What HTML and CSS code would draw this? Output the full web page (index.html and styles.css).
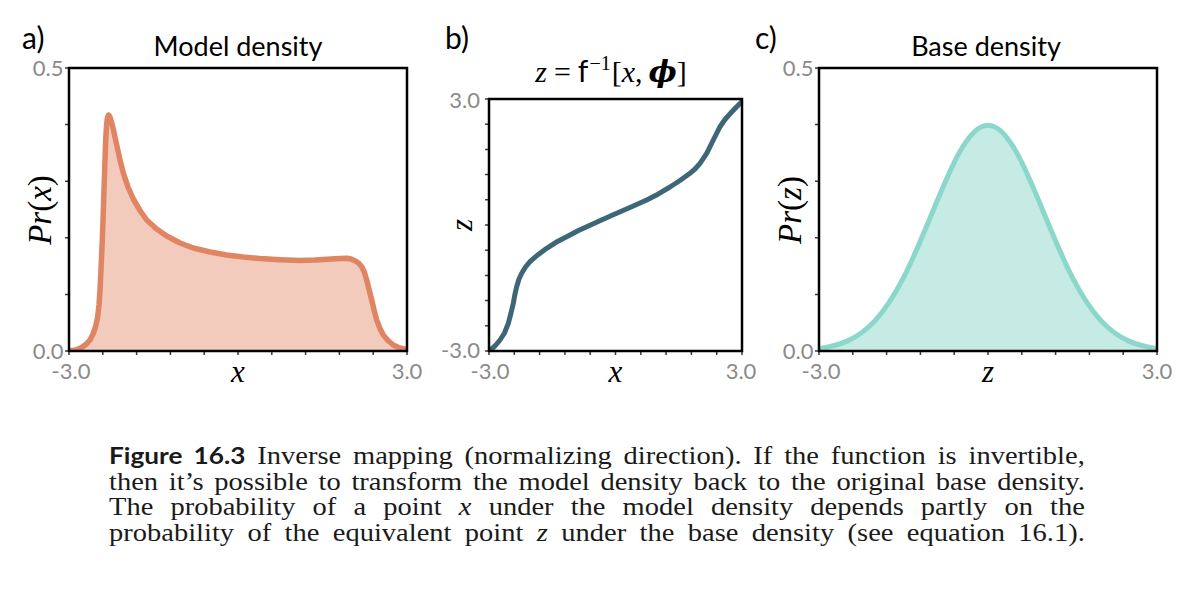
FILE: index.html
```html
<!DOCTYPE html>
<html lang="en">
<head>
<meta charset="utf-8">
<title>Figure 16.3</title>
<link rel="stylesheet" href="styles.css">
</head>
<body>
<figure class="figure">
  <div class="panels">
    <svg class="panel panel-a" width="430" height="400" viewBox="0 0 430 400">
      <defs><clipPath id="clipA"><rect x="69" y="68" width="338" height="283"/></clipPath></defs>
      <text class="plabel" x="22" y="49">a)</text>
      <text class="ptitle" x="238" y="56">Model density</text>
      <g clip-path="url(#clipA)">
        <path class="fill-a" d="M69,350.8 L74,350.3 78,349.2 82,347.3 86,344.3 90,340 93,334 95.5,327 97.5,318 99,305 100,290 101.2,265 102.3,240 103.2,215 104,190 104.9,163 105.7,140 106.5,126 107.4,118 108.5,115 109.8,116.5 111.2,121 113,128 116.7,145 120,160 123.3,173 128,187 133.3,199 140,210.5 146.7,220 156,228.5 166.7,236 180,243 193.3,248 210,252 226.7,255 243,257 260,258.5 280,259.7 300,260.5 315,260 327,259.3 340,258.4 347,258.3 351,259 355,260.7 358.5,263 361.7,266.7 364.3,272 366.7,280 369.2,290 371.7,300 374.2,310.5 376.7,320 380,328.5 383.3,335 388,340.5 393.3,345 399,347.8 407,349.5 L407,351 L69,351 Z"/>
        <path class="line-a" d="M69,350.8 L74,350.3 78,349.2 82,347.3 86,344.3 90,340 93,334 95.5,327 97.5,318 99,305 100,290 101.2,265 102.3,240 103.2,215 104,190 104.9,163 105.7,140 106.5,126 107.4,118 108.5,115 109.8,116.5 111.2,121 113,128 116.7,145 120,160 123.3,173 128,187 133.3,199 140,210.5 146.7,220 156,228.5 166.7,236 180,243 193.3,248 210,252 226.7,255 243,257 260,258.5 280,259.7 300,260.5 315,260 327,259.3 340,258.4 347,258.3 351,259 355,260.7 358.5,263 361.7,266.7 364.3,272 366.7,280 369.2,290 371.7,300 374.2,310.5 376.7,320 380,328.5 383.3,335 388,340.5 393.3,345 399,347.8 407,349.5"/>
      </g>
      <path class="ticks" d="M65,68h4M65,124.6h4M65,181.2h4M65,237.8h4M65,294.4h4M65,351h4M69,351v4M102.8,351v4M136.6,351v4M170.4,351v4M204.2,351v4M238,351v4M271.8,351v4M305.6,351v4M339.4,351v4M373.2,351v4M407,351v4"/>
      <rect class="frame" x="69" y="68" width="338" height="283"/>
      <text class="tick end" x="63.5" y="76">0.5</text>
      <text class="tick end" x="63.5" y="358.5">0.0</text>
      <text class="tick mid" x="71" y="379">-3.0</text>
      <text class="tick mid" x="407" y="379">3.0</text>
      <text class="math axl mid" x="238" y="382">x</text>
      <text class="math yl mid" transform="translate(51,210) rotate(-90)">Pr<tspan class="up">(</tspan>x<tspan class="up">)</tspan></text>
    </svg>

    <svg class="panel panel-b" width="320" height="400" viewBox="0 0 320 400">
      <defs><clipPath id="clipB"><rect x="59" y="99" width="253" height="252"/></clipPath></defs>
      <text class="plabel" x="15" y="49">b)</text>
      <text class="math mid title-b" x="181" y="82">z<tspan class="up" dx="7">=</tspan><tspan class="sans-f" dx="7">f</tspan><tspan class="sup" dx="1" dy="-12">−1</tspan><tspan class="up" dx="1" dy="12">[</tspan>x<tspan class="up">,</tspan><tspan class="phi" dx="6">ϕ</tspan><tspan class="up">]</tspan></text>
      <g clip-path="url(#clipB)">
        <path class="line-b" d="M59.5,350.5 L65,346 70,340 74.5,333 78.3,323.3 81,313 83.3,303.3 85,294 86.7,286.7 89,279 91.7,273.3 95.5,267 100,261.7 107,255.5 116.7,248.3 126,242.3 136.7,236.7 148,230.8 160,225.2 171,220.2 183.3,214.8 200,207.5 216.7,200 228,194.2 240,187 250,180.5 260,173.3 265,169 270,163.3 276.7,153.3 283.3,140 290,126.7 295,119.5 300,113.8 306,107.5 312,101.5"/>
      </g>
      <path class="ticks" d="M55,99h4M55,124.2h4M55,149.4h4M55,174.6h4M55,199.8h4M55,225h4M55,250.2h4M55,275.4h4M55,300.6h4M55,325.8h4M55,351h4M59,351v4M84.3,351v4M109.6,351v4M134.9,351v4M160.2,351v4M185.5,351v4M210.8,351v4M236.1,351v4M261.4,351v4M286.7,351v4M312,351v4"/>
      <rect class="frame" x="59" y="99" width="253" height="252"/>
      <text class="tick end" x="50" y="107.5">3.0</text>
      <text class="tick end" x="50" y="357.5">-3.0</text>
      <text class="tick mid" x="60" y="378.5">-3.0</text>
      <text class="tick mid" x="311" y="378.5">3.0</text>
      <text class="math axl mid" x="185.5" y="382">x</text>
      <text class="math axl mid" transform="translate(42,225) rotate(-90)">z</text>
    </svg>

    <svg class="panel panel-c" width="442" height="400" viewBox="0 0 442 400">
      <defs><clipPath id="clipC"><rect x="69" y="68" width="338" height="283"/></clipPath></defs>
      <text class="plabel" x="5" y="49">c)</text>
      <text class="ptitle" x="236" y="56">Base density</text>
      <g clip-path="url(#clipC)">
        <path class="fill-c" d="M69,348.5 C78.4,347.25 87.8,345.24 97.2,341.1 C106.6,336.96 115.9,330.59 125.3,320.4 C134.7,310.21 144.1,296.03 153.5,277.7 C162.9,259.37 172.3,236.83 181.7,214 C191.1,191.17 200.4,168.31 209.8,151.7 C219.2,135.09 228.6,125.2 238,125.2 C247.4,125.2 256.8,135.09 266.2,151.7 C275.6,168.31 284.9,191.17 294.3,214 C303.7,236.83 313.1,259.37 322.5,277.7 C331.9,296.03 341.3,310.21 350.7,320.4 C360.1,330.59 369.4,336.96 378.8,341.1 C388.2,345.24 397.6,347.25 407,348.5 L407,351 L69,351 Z"/>
        <path class="line-c" d="M69,348.5 C78.4,347.25 87.8,345.24 97.2,341.1 C106.6,336.96 115.9,330.59 125.3,320.4 C134.7,310.21 144.1,296.03 153.5,277.7 C162.9,259.37 172.3,236.83 181.7,214 C191.1,191.17 200.4,168.31 209.8,151.7 C219.2,135.09 228.6,125.2 238,125.2 C247.4,125.2 256.8,135.09 266.2,151.7 C275.6,168.31 284.9,191.17 294.3,214 C303.7,236.83 313.1,259.37 322.5,277.7 C331.9,296.03 341.3,310.21 350.7,320.4 C360.1,330.59 369.4,336.96 378.8,341.1 C388.2,345.24 397.6,347.25 407,348.5"/>
      </g>
      <path class="ticks" d="M65,68h4M65,124.6h4M65,181.2h4M65,237.8h4M65,294.4h4M65,351h4M69,351v4M102.8,351v4M136.6,351v4M170.4,351v4M204.2,351v4M238,351v4M271.8,351v4M305.6,351v4M339.4,351v4M373.2,351v4M407,351v4"/>
      <rect class="frame" x="69" y="68" width="338" height="283"/>
      <text class="tick end" x="63.5" y="76">0.5</text>
      <text class="tick end" x="63.5" y="358.5">0.0</text>
      <text class="tick mid" x="71" y="379">-3.0</text>
      <text class="tick mid" x="407" y="379">3.0</text>
      <text class="math axl mid" x="238" y="382">z</text>
      <text class="math yl mid" transform="translate(51,210) rotate(-90)">Pr<tspan class="up">(</tspan>z<tspan class="up">)</tspan></text>
    </svg>
  </div>

  <figcaption class="caption">
    <p class="line"><b class="fignum">Figure 16.3</b> Inverse mapping (normalizing direction). If the function is invertible,</p>
    <p class="line">then it’s possible to transform the model density back to the original base density.</p>
    <p class="line">The probability of a point <i>x</i> under the model density depends partly on the</p>
    <p class="line">probability of the equivalent point <i>z</i> under the base density (see equation 16.1).</p>
  </figcaption>
</figure>
</body>
</html>
```

FILE: styles.css
```css
html, body {
  margin: 0;
  padding: 0;
  background: #ffffff;
}

body {
  width: 1192px;
  height: 592px;
  overflow: hidden;
  font-family: "Liberation Serif", "DejaVu Serif", serif;
  color: #111;
}

.figure {
  margin: 0;
}

.panels {
  display: flex;
  height: 400px;
}

.panel {
  display: block;
  overflow: visible;
  flex: none;
}

.plabel {
  font-family: "Lato", "DejaVu Sans", sans-serif;
  font-size: 30px;
  fill: #000;
}

.ptitle {
  font-family: "Lato", "DejaVu Sans", sans-serif;
  font-size: 27px;
  fill: #000;
  text-anchor: middle;
}

.tick {
  font-family: "Lato", "DejaVu Sans", sans-serif;
  font-size: 22px;
  fill: #8a8a8a;
}

.end { text-anchor: end; }
.mid { text-anchor: middle; }

.math {
  font-family: "Liberation Serif", "DejaVu Serif", serif;
  font-style: italic;
  font-size: 30px;
  fill: #000;
}

.math.axl {
  font-size: 31px;
}

.math.yl {
  font-size: 33px;
}

.math .up {
  font-style: normal;
}

.title-b {
  font-size: 30px;
}

.sans-f {
  font-family: "Lato", "DejaVu Sans", sans-serif;
  font-style: normal;
}

.sup {
  font-family: "Liberation Serif", "DejaVu Serif", serif;
  font-style: normal;
  font-size: 20px;
}

.phi {
  font-family: "DejaVu Serif", "Liberation Serif", serif;
  font-weight: bold;
  font-style: italic;
}

.frame {
  fill: none;
  stroke: #000;
  stroke-width: 2.5;
}

.ticks {
  fill: none;
  stroke: #3a3a3a;
  stroke-width: 1.5;
}

.fill-a {
  fill: #f2cbbc;
  stroke: none;
}

.line-a {
  fill: none;
  stroke: #e08563;
  stroke-width: 5.5;
  stroke-linejoin: round;
  stroke-linecap: round;
}

.line-b {
  fill: none;
  stroke: #3d6677;
  stroke-width: 5;
  stroke-linejoin: round;
  stroke-linecap: round;
}

.fill-c {
  fill: #c5ebe4;
  stroke: none;
}

.line-c {
  fill: none;
  stroke: #8bd8ca;
  stroke-width: 5;
  stroke-linejoin: round;
  stroke-linecap: round;
}

.caption {
  margin: 43px 0 0 109px;
  width: 856px;
  transform: scaleX(1.14);
  transform-origin: left top;
  font-family: "Liberation Serif", "DejaVu Serif", serif;
  font-size: 25px;
  line-height: 25.5px;
  color: #1a1a1a;
}

.line {
  margin: 0;
  text-align: justify;
  text-align-last: justify;
  white-space: nowrap;
}

.fignum {
  font-family: "Lato", "DejaVu Sans", sans-serif;
  font-weight: bold;
  font-size: 23px;
}
```
